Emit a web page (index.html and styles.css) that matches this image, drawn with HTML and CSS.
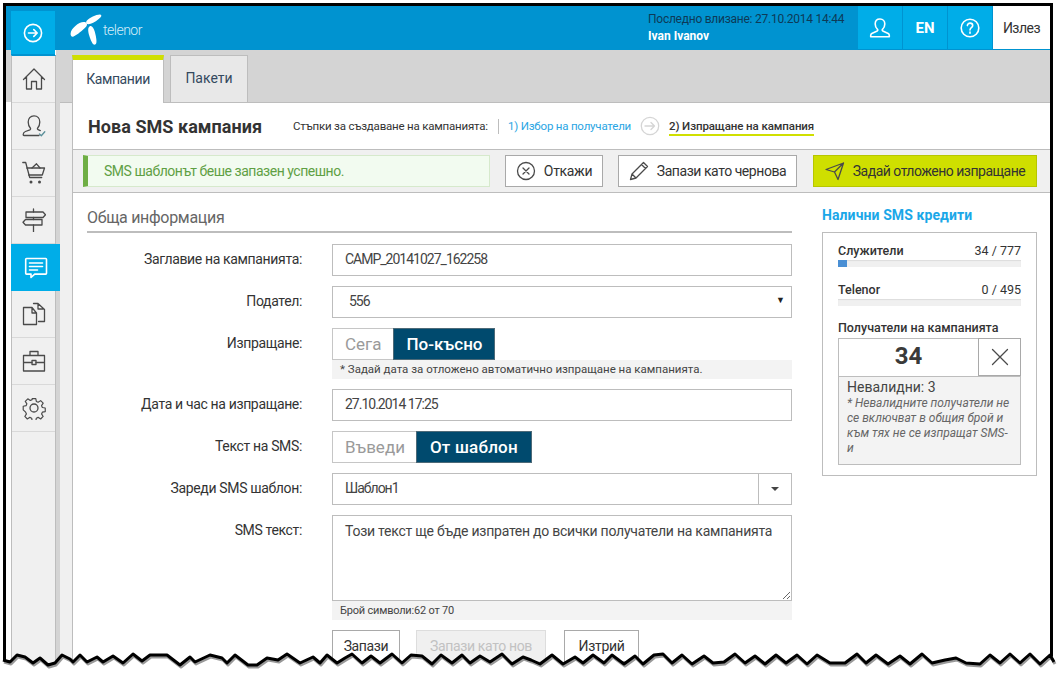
FILE: index.html
```html
<!DOCTYPE html>
<html lang="bg">
<head>
<meta charset="utf-8">
<title>Нова SMS кампания</title>
<link rel="stylesheet" href="styles.css">
</head>
<body>
<div class="shot">
  <header class="topbar">
    <button class="toggle" aria-label="Меню">
      <svg width="20" height="20" viewBox="0 0 20 20" class="ico-white"><circle cx="10" cy="10" r="8.6"/><path d="M5.5 10h8.5M10.8 6.6 14.2 10l-3.4 3.4"/></svg>
    </button>
    <div class="logo">
      <svg width="32" height="32" viewBox="0 0 32 32"><path class="petal" d="M.6 19.500C1 14.500 8.500 8 13.800 8c3.400 0 4.200 2.800 2 5C13 16 7 21 3.500 22.500 1.600 23.300.4 21.400.6 19.500Z"/><path class="petal" d="M16.500 7C19.500 3.500 26 .5 29.800.5c1.800 0 2 1.600.8 2.800-2.500 2.600-6.800 5.600-10 6.500-3 .8-5.600.3-4.100-2.800Z"/><path class="petal" d="M19.500 12.500c2.200-1.500 4.200 1.400 5.300 5.300 1 3.800 2.200 8.800 1.500 11.300-.6 2.200-2.900 2.200-4 0-1.600-3-3.900-8.800-4.100-12.600-.1-2 .3-3.200 1.300-4Z"/></svg>
      <span class="logo-text">telenor</span>
    </div>
    <div class="login">
      <div class="login-date">Последно влизане: 27.10.2014 14:44</div>
      <div class="login-name">Ivan Ivanov</div>
    </div>
    <nav class="top-actions">
      <a class="top-btn"><svg width="22" height="22" viewBox="0 0 22 22" class="ico-white"><path d="M11 2c-3 0-4.8 2.2-4.8 5 0 2.400 1 4.200 2.300 5.300.5.5.4 1.400-.3 1.700L2.800 16.500c-.9.4-1.100 1.300-1.100 2.100v1.200h18.600v-1.200c0-.8-.2-1.700-1.100-2.100L13.800 14c-.7-.3-.8-1.200-.3-1.700 1.300-1.100 2.300-2.900 2.300-5.300 0-2.800-1.800-5-4.800-5Z"/></svg></a>
      <a class="top-btn top-en">EN</a>
      <a class="top-btn"><svg width="20" height="20" viewBox="0 0 20 20" class="ico-white"><circle cx="10" cy="10" r="8.800"/><path d="M7.400 7.600c0-1.500 1.200-2.500 2.700-2.500s2.600 1 2.600 2.300c0 2.200-2.700 2.200-2.700 4.500"/><path d="M10 14v1.200"/></svg></a>
      <a class="logout">Излез</a>
    </nav>
  </header>

  <div class="workspace">
    <div class="gutter"><div class="gutter-top"></div></div>
    <aside class="sidebar">
      <a class="side-item"><svg width="24" height="24" viewBox="0 0 24 24" class="ico"><path d="M1.500 12.500 12 2l10.500 10.500M4.500 10v12h5v-7.500h5V22h5V10"/></svg></a>
      <a class="side-item"><svg width="24" height="24" viewBox="0 0 24 24" class="ico"><path d="M17 21.500H2c-.5 0-.8-.4-.8-.9 0-1.500.8-2.600 2.200-3.100l4.500-1.700c.8-.4.900-1.200.4-1.800C7 12.500 6.200 10.500 6.200 8 6.200 4.500 8.300 1.800 12 1.800S17.800 4.500 17.800 8c0 2.500-.8 4.500-2.100 6-.5.6-.3 1.400.4 1.700l2.200.9"/><path class="ico-check" d="m17.500 20 1.800 1.700 3.500-4"/></svg></a>
      <a class="side-item"><svg width="24" height="24" viewBox="0 0 24 24" class="ico"><path d="M.800 1.500h2.900l4 15h12"/><path d="M4.800 7h17.700l-2.200 7H6.700"/><path d="M10 7 14.500 2.800 18 7"/><circle class="dot" cx="9" cy="21" r="1.500"/><circle class="dot" cx="17.500" cy="21" r="1.500"/></svg></a>
      <a class="side-item"><svg width="24" height="24" viewBox="0 0 24 24" class="ico"><path d="M11.500 1v3M11.500 9.500v2M11.500 17v7"/><path d="M4 4h17l2.500 2.700L21 9.500H4Z"/><path d="M20 11.500H3.500L1 14.200 3.500 17H20Z"/></svg></a>
      <a class="side-item side-active"><svg width="24" height="24" viewBox="0 0 24 24" class="ico-white"><path d="M2.500 2.500h19.200c.4 0 .8.400.8.800v14c0 .4-.4.800-.8.800h-11L7 21.500v-3.400H2.500c-.4 0-.8-.4-.8-.8v-14c0-.4.400-.8.800-.8Z"/><path d="M5.500 7h13M5.500 10.500h13M5.500 14h8"/></svg></a>
      <a class="side-item"><svg width="24" height="24" viewBox="0 0 24 24" class="ico"><path d="M10 5.500H1.500v17h13V11ZM10 5.500V11h4.500"/><path d="M11.500 1.500h4.500v5.500h5.800M16 1.500 22.500 7.500V19.500h-6"/></svg></a>
      <a class="side-item"><svg width="24" height="24" viewBox="0 0 24 24" class="ico"><path d="M1.500 6.500h21v15.500h-21ZM1.500 13.500h8.500M14 13.500h8.500M8 6.500V2.500h8v4"/><rect x="10" y="11.500" width="4" height="4"/></svg></a>
      <a class="side-item"><svg width="24" height="24" viewBox="0 0 24 24" class="ico"><circle cx="12" cy="12" r="4"/><path d="M10 1.500h4l.6 3.200 2 .9 2.800-1.800 2.800 2.800-1.800 2.800.9 2 3.200.6v4l-3.200.6-.9 2 1.800 2.800-2.800 2.800-2.800-1.800-2 .9-.6 3.200h-4l-.6-3.200-2-.9-2.800 1.800-2.800-2.800 1.800-2.800-.9-2L0 14V10l3.200-.6.9-2L2.300 4.600 5.100 1.800l2.800 1.800 2-.9Z" transform="translate(1.200 1.200) scale(.9)"/></svg></a>
    </aside>
    <div class="seam"></div>
    <div class="content">
      <div class="tabs">
        <a class="tab tab-active">Кампании</a>
        <a class="tab">Пакети</a>
      </div>
      <div class="lower">
        <div class="rail"></div>
        <main class="main">
          <div class="titlebar">
            <h1 class="page-title">Нова SMS кампания</h1>
            <div class="steps">
              <span class="steps-label">Стъпки за създаване на кампанията:</span>
              <span class="step-link">1) Избор на получатели</span>
              <svg class="step-arrow" width="20" height="20" viewBox="0 0 20 20"><circle cx="10" cy="10" r="8.700"/><path d="M5 10h9.500M11 6.500l3.500 3.500-3.500 3.500"/></svg>
              <span class="step-current">2) Изпращане на кампания</span>
            </div>
          </div>
          <div class="actionbar">
            <div class="alert">SMS шаблонът беше запазен успешно.</div>
            <button class="btn btn-cancel"><svg width="20" height="20" viewBox="0 0 20 20" class="ico"><circle cx="10" cy="10" r="8.500"/><path d="m7 7 6 6M13 7l-6 6"/></svg>Откажи</button>
            <button class="btn btn-draft"><svg width="20" height="20" viewBox="0 0 20 20" class="ico"><path d="M1.500 18.500 3 13 14.500 1.500l4 4L7 17ZM3 13l4 4M12.500 3.500l4 4"/></svg>Запази като чернова</button>
            <button class="btn btn-send"><svg width="20" height="20" viewBox="0 0 20 20" class="ico"><path d="M1 8.500 18.500 2 13 18.500 9.500 11ZM9.500 11 18.500 2"/></svg>Задай отложено изпращане</button>
          </div>
          <div class="columns">
            <section class="form">
              <h2 class="section-title">Обща информация</h2>
              <div class="form-grid">
                <label class="form-label">Заглавие на кампанията:</label>
                <div class="field">CAMP_20141027_162258</div>

                <label class="form-label">Подател:</label>
                <div class="field field-select">556<span class="caret">▼</span></div>

                <label class="form-label">Изпращане:</label>
                <div>
                  <div class="switch"><span class="switch-off">Сега</span><span class="switch-on">По-късно</span></div>
                  <div class="hint">* Задай дата за отложено автоматично изпращане на кампанията.</div>
                </div>

                <label class="form-label">Дата и час на изпращане:</label>
                <div class="field">27.10.2014 17:25</div>

                <label class="form-label">Текст на SMS:</label>
                <div class="switch"><span class="switch-off switch-off-tight">Въведи</span><span class="switch-on switch-wide">От шаблон</span></div>

                <label class="form-label">Зареди SMS шаблон:</label>
                <div class="field field-combo">Шаблон1<span class="combo-btn"><i class="combo-caret"></i></span></div>

                <label class="form-label">SMS текст:</label>
                <div>
                  <textarea class="sms-text" rows="3">Този текст ще бъде изпратен до всички получатели на кампанията</textarea>
                  <div class="hint hint-count">Брой символи:62 от 70</div>
                </div>

                <span></span>
                <div class="form-buttons">
                  <button class="fbtn fbtn-save">Запази</button>
                  <button class="fbtn fbtn-new">Запази като нов</button>
                  <button class="fbtn fbtn-del">Изтрий</button>
                </div>
              </div>
            </section>
            <aside class="credits">
              <h2 class="credits-title">Налични SMS кредити</h2>
              <div class="credits-box">
                <div class="credit-row"><b>Служители</b><span>34 / 777</span></div>
                <div class="meter"><div class="meter-fill"></div></div>
                <div class="credit-row credit-second"><b>Telenor</b><span>0 / 495</span></div>
                <div class="meter"></div>
                <div class="recipients-title">Получатели на кампанията</div>
                <div class="recipients">
                  <div class="recipients-count">34</div>
                  <button class="recipients-x" aria-label="Премахни"><svg width="18" height="18" viewBox="0 0 18 18" class="ico"><path d="m1.500 1.500 15 15M16.500 1.500l-15 15"/></svg></button>
                </div>
                <div class="invalid">
                  <div class="invalid-count">Невалидни: 3</div>
                  <div class="invalid-note">* Невалидните получатели не се включват в общия брой и към тях не се изпращат SMS-и</div>
                </div>
              </div>
            </aside>
          </div>
        </main>
      </div>
    </div>
  </div>
  <svg class="torn" width="1057" height="676" viewBox="0 0 1057 676" aria-hidden="true">
    <polygon class="torn-fill" points="0,660 3,660 10,662 17,655 25,657 33,663 40,658 48,665 55,663 62,655 70,659 73,662 80,655 87,662 97,657 103,662 113,656 123,663 133,654 142,661 150,655 167,655 180,665 190,657 195,662 210,655 222,658 227,663 235,655 248,665 257,665 267,658 278,660 287,654 300,663 313,657 320,663 327,655 337,663 345,658 352,654 362,663 371,656 380,663 392,654 402,663 411,655 422,656 432,664 441,655 452,663 462,655 470,663 480,656 490,662 502,654 512,664 523,657 531,660 540,664 552,655 563,664 575,657 583,663 593,655 604,663 612,655 624,664 635,656 643,664 654,655 663,654 672,663 682,655 692,664 704,656 713,663 724,662 735,654 745,663 755,656 765,664 776,655 786,663 797,655 807,664 817,655 830,663 845,663 857,654 866,663 876,655 888,664 900,656 910,664 922,654 932,663 945,660 956,658 966,663 980,664 990,655 1000,663 1010,654 1020,663 1030,654 1040,664 1050,655 1054,662 1057,662 1057,676 0,676"/>
    <polyline class="torn-shadow" points="3,660 10,662 17,655 25,657 33,663 40,658 48,665 55,663 62,655 70,659 73,662 80,655 87,662 97,657 103,662 113,656 123,663 133,654 142,661 150,655 167,655 180,665 190,657 195,662 210,655 222,658 227,663 235,655 248,665 257,665 267,658 278,660 287,654 300,663 313,657 320,663 327,655 337,663 345,658 352,654 362,663 371,656 380,663 392,654 402,663 411,655 422,656 432,664 441,655 452,663 462,655 470,663 480,656 490,662 502,654 512,664 523,657 531,660 540,664 552,655 563,664 575,657 583,663 593,655 604,663 612,655 624,664 635,656 643,664 654,655 663,654 672,663 682,655 692,664 704,656 713,663 724,662 735,654 745,663 755,656 765,664 776,655 786,663 797,655 807,664 817,655 830,663 845,663 857,654 866,663 876,655 888,664 900,656 910,664 922,654 932,663 945,660 956,658 966,663 980,664 990,655 1000,663 1010,654 1020,663 1030,654 1040,664 1050,655 1054,662"/>
    <polyline class="torn-line" points="3,660 10,662 17,655 25,657 33,663 40,658 48,665 55,663 62,655 70,659 73,662 80,655 87,662 97,657 103,662 113,656 123,663 133,654 142,661 150,655 167,655 180,665 190,657 195,662 210,655 222,658 227,663 235,655 248,665 257,665 267,658 278,660 287,654 300,663 313,657 320,663 327,655 337,663 345,658 352,654 362,663 371,656 380,663 392,654 402,663 411,655 422,656 432,664 441,655 452,663 462,655 470,663 480,656 490,662 502,654 512,664 523,657 531,660 540,664 552,655 563,664 575,657 583,663 593,655 604,663 612,655 624,664 635,656 643,664 654,655 663,654 672,663 682,655 692,664 704,656 713,663 724,662 735,654 745,663 755,656 765,664 776,655 786,663 797,655 807,664 817,655 830,663 845,663 857,654 866,663 876,655 888,664 900,656 910,664 922,654 932,663 945,660 956,658 966,663 980,664 990,655 1000,663 1010,654 1020,663 1030,654 1040,664 1050,655 1054,662"/>
  </svg>
</div>
</body>
</html>
```
FILE: styles.css
```css
* { box-sizing: border-box; }
html, body { margin: 0; height: 100%; background: #fff; overflow: hidden; }
body { font-family: Roboto, "Liberation Sans", sans-serif; font-size: 14px; color: #333; letter-spacing: -.35px; }
button { font-family: inherit; letter-spacing: inherit; cursor: pointer; }
h1, h2 { margin: 0; }

.shot { width: 1050px; height: 673px; margin: 3px 0 0 3px; border: solid #000; border-width: 3px 3px 0; display: flex; flex-direction: column; overflow: hidden; background: #fff; }
.torn { position: fixed; left: 0; top: 0; pointer-events: none; }
.torn-fill { fill: #fff; }
.torn-line { fill: none; stroke: #000; stroke-width: 3; stroke-linejoin: round; }
.torn-shadow { fill: none; stroke: #999; stroke-width: 3; stroke-linejoin: round; transform: translate(1px, 2px); }

.ico, .ico-white, .step-arrow { fill: none; stroke-width: 1.3; stroke-linecap: round; stroke-linejoin: round; }
.ico { stroke: #4a4a4a; }
.ico-white { stroke: #fff; stroke-width: 1.6; }
.dot { fill: #4a4a4a; stroke: none; }
.ico-check { stroke: #5a8f9a; }
.petal { fill: #fff; }

.topbar { height: 44px; flex: none; display: flex; background: #0093d0; }
.toggle { width: 44px; height: 44px; margin: 5px 0 0 5px; padding: 0; flex: none; border: 0; border-bottom: 1px solid #0093d0; background: #00ade8; display: flex; align-items: center; justify-content: center; position: relative; }
.logo { width: 593px; padding: 8px 0 0 15px; display: flex; align-items: flex-start; }
.logo-text { margin: 8px 0 0 1px; font-size: 14px; letter-spacing: -.5px; color: #d5edf8; font-weight: 300; }
.login { width: 210px; padding-top: 5px; font-size: 12px; line-height: 17px; letter-spacing: -.25px; }
.login-date { color: #0d3a57; white-space: nowrap; }
.login-name { color: #fff; font-weight: 700; letter-spacing: 0; }
.top-actions { display: flex; margin-left: 0; }
.top-btn { width: 45px; height: 43px; background: #00ade8; border-right: 1px solid #0093d0; display: flex; align-items: center; justify-content: center; color: #fff; font-weight: 700; font-size: 15px; letter-spacing: 0; }
.logout { width: 57px; height: 43px; background: #fff; display: flex; align-items: center; justify-content: center; font-size: 14px; color: #333; letter-spacing: -.5px; }

.workspace { flex: 1; display: flex; min-height: 0; }
.gutter { width: 5px; flex: none; }
.gutter-top { height: 52px; background: #d4d4d4; }
.sidebar { width: 45px; flex: none; margin-top: 5px; background: #f0f0f0; border: solid #bdbdbd; border-width: 1px 1px 0; border-top-color: #0093d0; position: relative; }
.side-item { height: 47px; display: flex; align-items: center; justify-content: center; border-bottom: 1px solid #d9d9d9; }
.side-active { background: #00ade8; border-bottom: 0; margin-right: -5px; margin-left: -1px; position: relative; z-index: 1; }
.seam { width: 4px; flex: none; background: #d4d4d4; }
.content { flex: 1; min-width: 0; display: flex; flex-direction: column; }
.tabs { height: 53px; flex: none; padding: 5px 0 0 12px; display: flex; align-items: flex-end; gap: 6px; background: #d4d4d4; border-bottom: 1px solid #bdbdbd; }
.tab { height: 47px; width: 78px; display: flex; align-items: center; justify-content: center; background: #e8e8e8; border: 1px solid #bdbdbd; border-bottom: 0; color: #34495e; padding-bottom: 2px; letter-spacing: 0; }
.tab-active { width: 92px; height: 48px; margin-bottom: -1px; position: relative; background: #fff; border: 0; border-left: 1px solid #bdbdbd; border-right: 1px solid #bdbdbd; border-top: 5px solid #d0df00; padding-bottom: 5px; letter-spacing: -.4px; }
.lower { flex: 1; display: flex; min-height: 0; }
.rail { width: 12px; flex: none; background: #f0f0f0; }
.main { flex: 1; min-width: 0; border-left: 1px solid #bdbdbd; background: #fff; }

.titlebar { height: 47px; display: flex; align-items: center; padding-left: 15px; border-bottom: 1px solid #bdbdbd; }
.page-title { font-size: 18px; font-weight: 700; color: #333; width: 205px; white-space: nowrap; letter-spacing: .05px; }
.steps { display: flex; align-items: center; font-size: 11.500px; white-space: nowrap; letter-spacing: 0; }
.steps-label { width: 206px; padding-right: 10px; border-right: 1px solid #bdbdbd; line-height: 15px; letter-spacing: -.2px; }
.step-link { margin-left: 9px; width: 132px; color: #2aa5e3; letter-spacing: -.2px; }
.step-arrow { stroke: #d5d5d5; stroke-width: 1.3; width: 20px; margin-right: 9px; }
.step-current { font-weight: 500; border-bottom: 2px solid #d0df00; line-height: 15px; letter-spacing: -.1px; position: relative; top: 1px; }

.actionbar { height: 43px; padding: 5px 0 0 10px; display: flex; align-items: flex-start; background: #f0f0f0; border-bottom: 1px solid #bdbdbd; }
.alert { width: 407px; height: 32px; margin-right: 15px; padding-left: 16px; display: flex; align-items: center; font-size: 14px; color: #5fa044; background: #f2fbf0; border: 1px solid #d6e9cc; border-left: 5px solid #6fae45; letter-spacing: -.47px; }
.btn { height: 32px; padding: 0; display: flex; align-items: center; justify-content: center; gap: 8px; font-size: 14px; color: #333; background: #fff; border: 1px solid #a9a9a9; }
.btn-cancel { width: 98px; margin-right: 15px; }
.btn-draft { width: 179px; margin-right: 16px; letter-spacing: -.45px; }
.btn-send { width: 224px; background: #cfdf00; border-color: #b7c600; letter-spacing: -.5px; }

.columns { display: flex; padding: 0 0 0 14px; }
.form { width: 705px; flex: none; }
.section-title { height: 40px; padding-top: 15px; border-bottom: 2px solid #bdbdbd; font-size: 16px; line-height: 20px; font-weight: 400; color: #666; letter-spacing: -.3px; }
.form-grid { display: grid; grid-template-columns: 215px 460px; column-gap: 30px; row-gap: 10px; margin-top: 11px; }
.form-label { height: 32px; display: flex; align-items: center; justify-content: flex-end; padding-bottom: 2px; font-size: 14px; color: #333; white-space: nowrap; }
.field { height: 32px; display: flex; align-items: center; padding: 0 0 2px 12px; border: 1px solid #bdbdbd; font-size: 14px; color: #444; background: #fff; position: relative; letter-spacing: -1px; }
.field-select { padding-left: 16px; }
.caret { position: absolute; right: 7px; top: 8px; font-size: 9px; color: #222; }
.combo-btn { position: absolute; right: 0; top: 0; width: 33px; height: 30px; border-left: 1px solid #bdbdbd; display: flex; align-items: center; justify-content: center; }
.combo-caret { width: 0; height: 0; border: 4px solid transparent; border-top: 4px solid #444; border-bottom: 0; }
.switch { height: 32px; display: flex; font-size: 17px; font-weight: 500; letter-spacing: 0; }
.switch-off { padding: 0 12px; display: flex; align-items: center; color: #9a9a9a; font-weight: 400; border: 1px solid #c6c6c6; border-right: 0; background: #fff; }
.switch-off-tight { padding-right: 11px; }
.switch-on { padding: 0 12px; display: flex; align-items: center; color: #fff; background: #004a6e; border: 1px solid #4d6a78; }
.switch-wide { padding: 0 13px; letter-spacing: .2px; }
.hint { height: 19px; padding-left: 8px; background: #f3f3f3; font-size: 11.500px; line-height: 18px; color: #444; white-space: nowrap; letter-spacing: 0; }
.hint-count { font-size: 11px; line-height: 19px; letter-spacing: -.2px; }
.sms-text { display: block; width: 460px; height: 86px; padding: 6px 12px; margin: 0; border: 1px solid #bdbdbd; font-family: inherit; font-size: 14px; line-height: 18px; letter-spacing: -.25px; color: #444; background: #fff; outline: 0; }
.form-buttons { display: flex; }
.fbtn { height: 32px; padding: 0; font-size: 14px; background: #fff; border: 1px solid #a9a9a9; color: #333; }
.fbtn-save { width: 68px; margin-right: 16px; }
.fbtn-new { width: 130px; margin-right: 18px; background: #f0f0f0; border-color: #ddd; color: #c2c2c2; }
.fbtn-del { width: 75px; }

.credits { width: 215px; flex: none; margin-left: 30px; letter-spacing: 0; }
.credits-title { height: 39px; padding-top: 14px; font-size: 14px; line-height: 17px; font-weight: 700; color: #1aa7e8; white-space: nowrap; letter-spacing: .1px; }
.credits-box { height: 244px; padding: 10px 15px 0; border: 1px solid #bdbdbd; font-size: 13px; }
.credit-row { display: flex; justify-content: space-between; line-height: 15px; height: 15px; font-size: 12.500px; color: #333; }
.credit-row b { font-weight: 500; }
.credit-second { margin-top: 15px; }
.meter { height: 7px; margin-top: 2px; background: #f0f0f0; box-shadow: inset 0 1px 1px #dcdcdc; }
.meter-fill { width: 5%; height: 100%; background: #4a8fd4; }
.recipients-title { margin-top: 14px; height: 18px; line-height: 15px; font-size: 12.500px; font-weight: 500; white-space: nowrap; }
.recipients { height: 38px; display: flex; border: 1px solid #bdbdbd; border-bottom: 0; border-right: 0; }
.recipients-count { flex: 1; display: flex; align-items: center; justify-content: center; padding-bottom: 4px; font-size: 24px; font-weight: 700; color: #3a3a3a; }
.recipients-x { width: 43px; height: 38px; padding: 0; background: #fff; border: 1px solid #a9a9a9; display: flex; align-items: center; justify-content: center; margin-top: -1px; }
.invalid { height: 89px; padding: 2px 8px; background: #f3f3f3; border: 1px solid #bdbdbd; }
.invalid-count { font-size: 14px; line-height: 17px; color: #444; }
.invalid-note { font-size: 12px; line-height: 15px; font-style: italic; color: #666; }
```
